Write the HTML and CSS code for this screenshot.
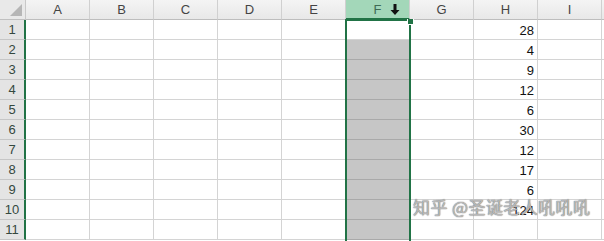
FILE: index.html
```html
<!DOCTYPE html>
<html lang="zh">
<head>
    <meta charset="UTF-8">
    <title>Sheet1</title>
    <link rel="stylesheet" href="styles.css">
</head>
<body>
    <div class="sheet">
        <div class="grid">
            <!-- 表头 -->
            <div class="corner"><span class="tri"></span></div>
            <div class="col-head">A</div>
            <div class="col-head">B</div>
            <div class="col-head">C</div>
            <div class="col-head">D</div>
            <div class="col-head">E</div>
            <div class="col-head sel">F
                <svg class="arrow" width="10" height="11" viewBox="0 0 10 11"><path d="M3.5 0h3v6h3L5 11 0.5 6h3z" fill="#111"/></svg>
            </div>
            <div class="col-head">G</div>
            <div class="col-head">H</div>
            <div class="col-head">I</div>
            <div class="col-head pad"></div>
        </div>
        <div class="grid" id="rows"></div>
        <div class="selection"><span class="handle"></span></div>
        <div class="watermark">知乎 @圣诞老人吼吼吼</div>
    </div>
    <script>
        const values = [28, 4, 9, 12, 6, 30, 12, 17, 6, 124, ''];
        const rows = document.getElementById('rows');
        let html = '';
        values.forEach((v, i) => {
            html += '<div class="row-head">' + (i + 1) + '</div>';
            for (let c = 0; c < 9; c++) {
                let cls = 'cell';
                let text = '';
                if (c === 5) cls += i === 0 ? ' active' : ' shaded';
                if (c === 7) text = v;
                html += '<div class="' + cls + '">' + text + '</div>';
            }
            html += '<div class="cell pad"></div>';
        });
        rows.innerHTML = html;
    </script>
</body>
</html>
```

FILE: styles.css
```css
body {
    margin: 0;
    background: #fff;
    font-family: "Liberation Sans", Arial, sans-serif;
    overflow: hidden;
}
.sheet {
    position: relative;
    width: 604px;
    height: 241px;
    overflow: hidden;
}
.grid {
    display: grid;
    grid-template-columns: 26px repeat(9, 64px) 2px;
    grid-auto-rows: 20px;
}
.corner {
    background: #e9e9e9;
    border-right: 1px solid #c8c8c8;
    border-bottom: 1px solid #c0c0c0;
    box-sizing: border-box;
    position: relative;
}
.tri {
    position: absolute;
    right: 3px;
    bottom: 3px;
    width: 0;
    height: 0;
    border-left: 12px solid transparent;
    border-bottom: 12px solid #b6b6b6;
}
.col-head {
    background: linear-gradient(#f4f4f4, #e8e8e8);
    border-right: 1px solid #d0d0d0;
    border-bottom: 1px solid #bdbdbd;
    box-sizing: border-box;
    color: #444;
    font-size: 13px;
    line-height: 19px;
    text-align: center;
    position: relative;
}
.col-head.sel {
    background: #a3d7b9;
    color: #3f6b55;
    border-bottom: 2px solid #217346;
}
.col-head.pad {
    border-right: none;
}
.arrow {
    position: absolute;
    left: 44px;
    top: 4px;
}
.row-head {
    background: #e4e4e4;
    border-right: 2px solid #217346;
    border-bottom: 1px solid #c6c6c6;
    box-sizing: border-box;
    color: #34483e;
    font-size: 13px;
    line-height: 20px;
    text-align: center;
}
.cell {
    border-right: 1px solid #d4d4d4;
    border-bottom: 1px solid #d4d4d4;
    box-sizing: border-box;
    color: #111;
    font-size: 13px;
    line-height: 21px;
    text-align: right;
    padding-right: 3px;
}
.cell.shaded {
    background: #c6c6c6;
    border-bottom-color: #a9a9a9;
}
.cell.pad {
    padding: 0;
    border-right: none;
}
/* 选中列的边框 */
.selection {
    position: absolute;
    left: 345px;
    top: 19px;
    width: 66px;
    height: 224px;
    border: 2px solid #217346;
    box-sizing: border-box;
}
.handle {
    position: absolute;
    right: -5px;
    top: -2px;
    width: 5px;
    height: 5px;
    background: #217346;
    border: 1px solid #fff;
    border-top: none;
}
.watermark {
    position: absolute;
    left: 413px;
    top: 194px;
    font-family: "Noto Sans CJK SC", sans-serif;
    font-size: 17px;
    letter-spacing: 0.4px;
    color: rgba(235, 235, 235, 0.6);
    text-shadow: 0 0 1px #666, 0 0 1px #888;
    white-space: nowrap;
}
```
